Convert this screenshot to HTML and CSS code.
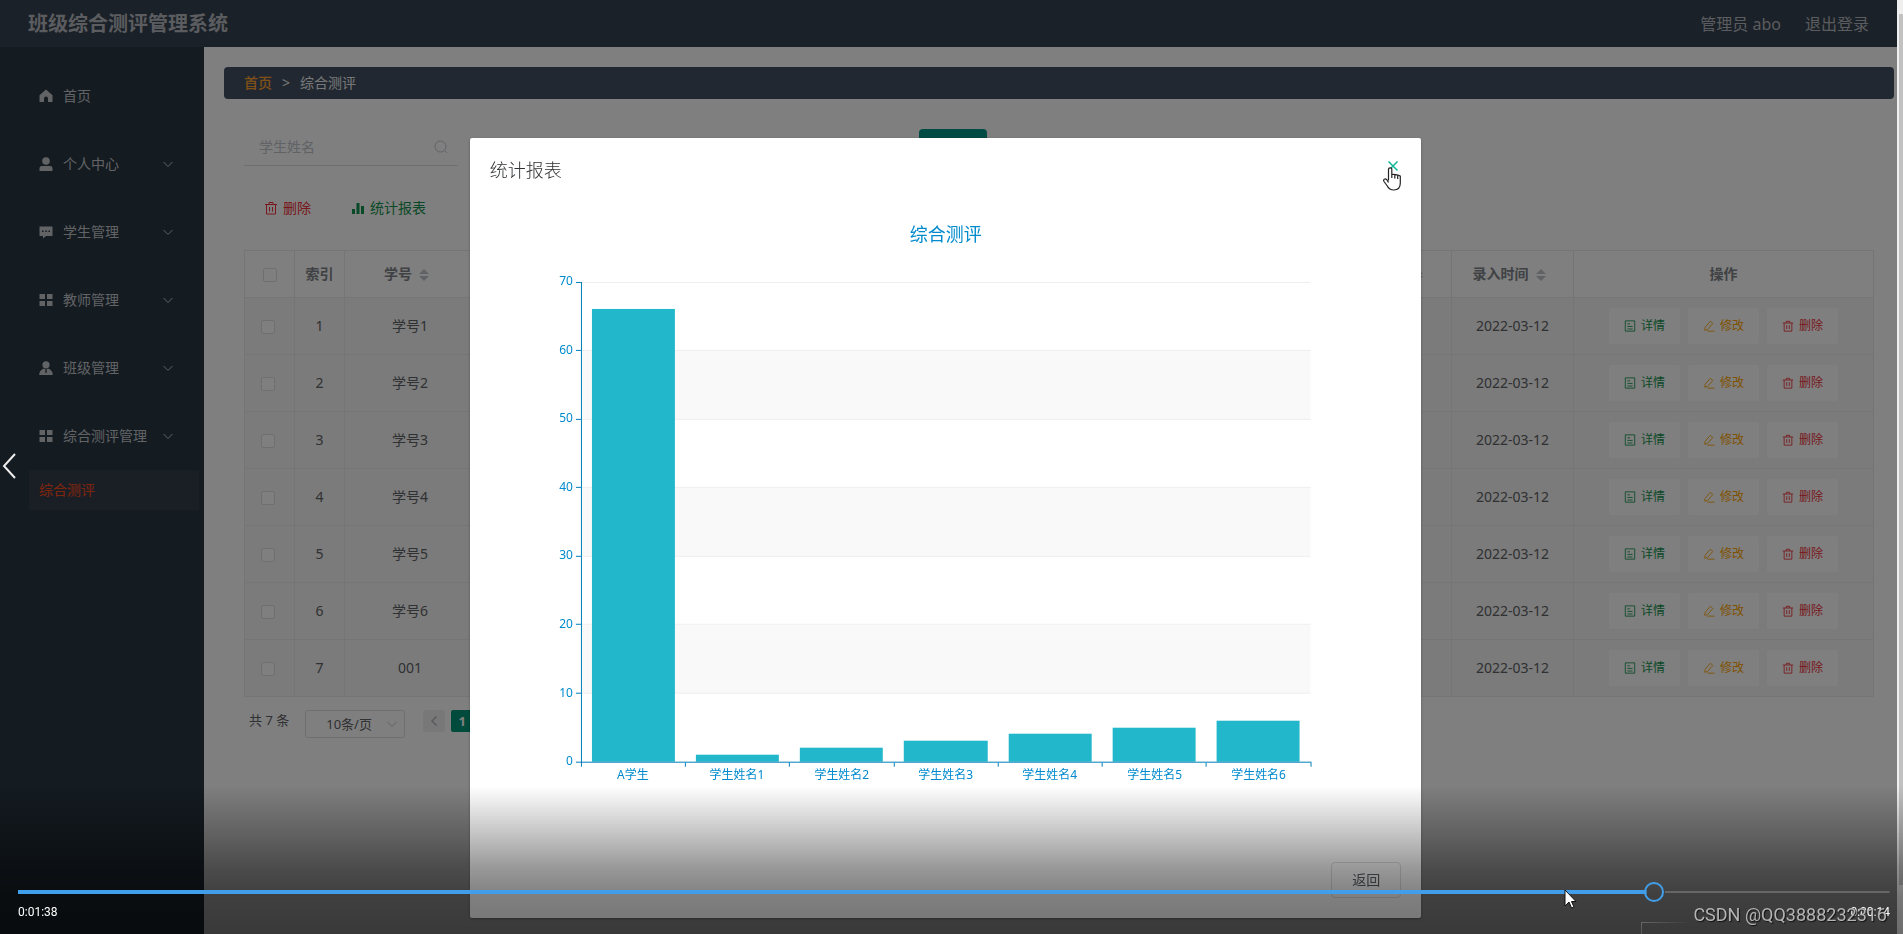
FILE: index.html
```html
<!DOCTYPE html>
<html lang="zh-CN">
<head>
<meta charset="utf-8">
<title>班级综合测评管理系统</title>
<link rel="stylesheet" href="styles.css">
</head>
<body>
<svg class="sprite" aria-hidden="true">
  <symbol id="home" viewBox="0 0 14 14"><path fill="currentColor" d="M7 .5.500 6.200V13H5V9.500a2 2 0 0 1 4 0V13h4.500V6.200z"/></symbol>
  <symbol id="user" viewBox="0 0 14 14"><circle cx="7" cy="4" r="3.800" fill="currentColor"/><path fill="currentColor" d="M.5 14v-3Q.5 9 3 9h8q2.500 0 2.500 2v3z"/></symbol>
  <symbol id="chat" viewBox="0 0 14 14"><path fill="currentColor" fill-rule="evenodd" d="M.5 1.500h13v9.500H7L4 13.500V11H.5zM3 5.500V7h1.500V5.500zm3.300 0V7h1.500V5.500zm3.200 0V7H11V5.500z"/></symbol>
  <symbol id="grid" viewBox="0 0 14 14"><path fill="currentColor" d="M.5 1H6v5H.5zM8 1h5.500v5H8zM.5 8H6v5H.5zM8 8h5.500v5H8z"/></symbol>
  <symbol id="person" viewBox="0 0 14 14"><circle cx="7" cy="3.800" r="3.600" fill="currentColor"/><path fill="currentColor" d="M.2 14q0-5 4.800-6.500l1.500 1L6.200 11l.8 1.500.8-1.500-.3-2.500 1.500-1q4.800 1.500 4.800 6.500z"/></symbol>
  <symbol id="down" viewBox="0 0 12 12"><path fill="none" stroke="currentColor" d="m1.500 4 4.500 4.500L10.500 4"/></symbol>
  <symbol id="left" viewBox="0 0 12 12"><path fill="none" stroke="currentColor" stroke-width="1.500" d="M8.500 1.500 4 6l4.500 4.500"/></symbol>
  <symbol id="search" viewBox="0 0 14 14"><circle cx="6.500" cy="6.500" r="5.500" fill="none" stroke="currentColor"/><path stroke="currentColor" d="m10.500 10.500 2.500 2.500"/></symbol>
  <symbol id="trash" viewBox="0 0 14 14"><path fill="none" stroke="currentColor" d="M1 3.500h12M2.500 3.500v9.500h9V3.500M5 3.500v-2h4v2M5.500 6v4.500M8.500 6v4.500"/></symbol>
  <symbol id="bars" viewBox="0 0 14 14"><path fill="currentColor" d="M1 8h3v5H1zM5.500 2h3v11h-3zM10 5h3v8h-3z"/></symbol>
  <symbol id="doc" viewBox="0 0 14 14"><path fill="none" stroke="currentColor" d="M1.500 1h11v12h-11zM4 4.500h3M4 7.500h6M4 10.500h6"/></symbol>
  <symbol id="edit" viewBox="0 0 14 14"><path fill="none" stroke="currentColor" d="m2.500 8.500 6-7 3 2.500-6 7-3.500 1zM5 13h8.500"/></symbol>
  <symbol id="sort" viewBox="0 0 10 12"><path fill="currentColor" d="M5 0 10 5H0zM0 7h10l-5 5z"/></symbol>
</svg>

<div class="app">
  <header class="topbar">
    <h1 class="brand">班级综合测评管理系统</h1>
    <div class="account"><span>管理员 abo</span><a href="#">退出登录</a></div>
  </header>
  <div class="layout">
    <nav class="sidebar">
      <a class="item" href="#"><svg class="icon"><use href="#home"/></svg><span>首页</span></a>
      <a class="item" href="#"><svg class="icon"><use href="#user"/></svg><span>个人中心</span><svg class="arrow"><use href="#down"/></svg></a>
      <a class="item" href="#"><svg class="icon"><use href="#chat"/></svg><span>学生管理</span><svg class="arrow"><use href="#down"/></svg></a>
      <a class="item" href="#"><svg class="icon"><use href="#grid"/></svg><span>教师管理</span><svg class="arrow"><use href="#down"/></svg></a>
      <a class="item" href="#"><svg class="icon"><use href="#person"/></svg><span>班级管理</span><svg class="arrow"><use href="#down"/></svg></a>
      <a class="item" href="#"><svg class="icon"><use href="#grid"/></svg><span>综合测评管理</span><svg class="arrow"><use href="#down"/></svg></a>
      <a class="subitem" href="#">综合测评</a>
    </nav>
    <main class="main">
      <div class="crumbs"><a href="#">首页</a><span class="sep">&gt;</span><span>综合测评</span></div>
      <div class="content">
        <form class="search">
          <label class="field"><input type="text" placeholder="学生姓名" aria-label="学生姓名"><svg class="icon"><use href="#search"/></svg></label>
          <button type="button" class="query" aria-label="查询"></button>
        </form>
        <div class="tools">
          <button type="button" class="tool red"><svg class="icon"><use href="#trash"/></svg>删除</button>
          <button type="button" class="tool green"><svg class="icon"><use href="#bars"/></svg>统计报表</button>
        </div>
        <table class="grid">
          <colgroup><col class="c-check"><col class="c-index"><col class="c-no"><col><col class="c-date"><col class="c-date"><col class="c-ops"></colgroup>
          <thead><tr><th><input type="checkbox" aria-label="全选"></th><th>索引</th><th class="sortable">学号<svg class="sort"><use href="#sort"/></svg></th><th></th><th class="end"><svg class="sort"><use href="#sort"/></svg></th><th class="sortable">录入时间<svg class="sort"><use href="#sort"/></svg></th><th>操作</th></tr></thead>
          <tbody>
            <tr><td class="pick"><input type="checkbox" aria-label="1"></td><td>1</td><td>学号1</td><td></td><td></td><td>2022-03-12</td><td><div class="ops"><button class="green"><svg><use href="#doc"/></svg>详情</button><button class="orange"><svg><use href="#edit"/></svg>修改</button><button class="red"><svg><use href="#trash"/></svg>删除</button></div></td></tr>
            <tr><td class="pick"><input type="checkbox" aria-label="2"></td><td>2</td><td>学号2</td><td></td><td></td><td>2022-03-12</td><td><div class="ops"><button class="green"><svg><use href="#doc"/></svg>详情</button><button class="orange"><svg><use href="#edit"/></svg>修改</button><button class="red"><svg><use href="#trash"/></svg>删除</button></div></td></tr>
            <tr><td class="pick"><input type="checkbox" aria-label="3"></td><td>3</td><td>学号3</td><td></td><td></td><td>2022-03-12</td><td><div class="ops"><button class="green"><svg><use href="#doc"/></svg>详情</button><button class="orange"><svg><use href="#edit"/></svg>修改</button><button class="red"><svg><use href="#trash"/></svg>删除</button></div></td></tr>
            <tr><td class="pick"><input type="checkbox" aria-label="4"></td><td>4</td><td>学号4</td><td></td><td></td><td>2022-03-12</td><td><div class="ops"><button class="green"><svg><use href="#doc"/></svg>详情</button><button class="orange"><svg><use href="#edit"/></svg>修改</button><button class="red"><svg><use href="#trash"/></svg>删除</button></div></td></tr>
            <tr><td class="pick"><input type="checkbox" aria-label="5"></td><td>5</td><td>学号5</td><td></td><td></td><td>2022-03-12</td><td><div class="ops"><button class="green"><svg><use href="#doc"/></svg>详情</button><button class="orange"><svg><use href="#edit"/></svg>修改</button><button class="red"><svg><use href="#trash"/></svg>删除</button></div></td></tr>
            <tr><td class="pick"><input type="checkbox" aria-label="6"></td><td>6</td><td>学号6</td><td></td><td></td><td>2022-03-12</td><td><div class="ops"><button class="green"><svg><use href="#doc"/></svg>详情</button><button class="orange"><svg><use href="#edit"/></svg>修改</button><button class="red"><svg><use href="#trash"/></svg>删除</button></div></td></tr>
            <tr><td class="pick"><input type="checkbox" aria-label="7"></td><td>7</td><td>001</td><td></td><td></td><td>2022-03-12</td><td><div class="ops"><button class="green"><svg><use href="#doc"/></svg>详情</button><button class="orange"><svg><use href="#edit"/></svg>修改</button><button class="red"><svg><use href="#trash"/></svg>删除</button></div></td></tr>
          </tbody>
        </table>
        <div class="pager">
          <span class="total">共 7 条</span>
          <label class="size"><select aria-label="每页条数"><option>10条/页</option></select><svg class="arrow"><use href="#down"/></svg></label>
          <button type="button" class="page prev" aria-label="上一页"><svg class="arrow"><use href="#left"/></svg></button>
          <button type="button" class="page current">1</button>
        </div>
      </div>
    </main>
  </div>
</div>

<div class="mask">
  <section class="dialog" role="dialog" aria-labelledby="dialog-title">
    <header class="dialog-head">
      <h2 id="dialog-title">统计报表</h2>
      <button type="button" class="close" aria-label="关闭"><svg viewBox="0 0 12 12"><path d="m1.500 1.500 9 9m0-9-9 9"/></svg></button>
    </header>
    <div class="dialog-body">
      <svg class="chart" viewBox="0 0 912 600" role="img" aria-label="综合测评">
        <text class="chart-title" x="456" y="19">综合测评</text>
        <path class="band" d="M91 129h730v68H91zM91 266h730v68H91zM91 403h730v68H91z"/>
        <path class="rule" d="M91 60.500h730M91 128.500h730M91 197.500h730M91 265.500h730M91 334.500h730M91 402.500h730M91 471.500h730"/>
        <g class="bar">
          <rect x="102" y="87" width="83" height="453"/><rect x="206" y="533" width="83" height="7"/><rect x="310" y="526" width="83" height="14"/><rect x="414" y="519" width="84" height="21"/><rect x="519" y="512" width="83" height="28"/><rect x="623" y="506" width="83" height="34"/><rect x="727" y="499" width="83" height="41"/>
        </g>
        <path class="axis" d="M91.500 60v485M86 540.500h736M86 60.500h5M86 128.500h5M86 197.500h5M86 265.500h5M86 334.500h5M86 402.500h5M86 471.500h5M195.500 541v4M299.500 541v4M404.500 541v4M508.500 541v4M612.500 541v4M716.500 541v4M821.500 541v4"/>
        <g class="label-y">
          <text x="83" y="63">70</text><text x="83" y="132">60</text><text x="83" y="200">50</text><text x="83" y="269">40</text><text x="83" y="337">30</text><text x="83" y="406">20</text><text x="83" y="475">10</text><text x="83" y="543">0</text>
        </g>
        <g class="label-x">
          <text x="143" y="557">A学生</text><text x="247" y="557">学生姓名1</text><text x="352" y="557">学生姓名2</text><text x="456" y="557">学生姓名3</text><text x="560" y="557">学生姓名4</text><text x="665" y="557">学生姓名5</text><text x="769" y="557">学生姓名6</text>
        </g>
      </svg>
    </div>
    <footer class="dialog-foot"><button type="button" class="back">返回</button></footer>
  </section>
</div>
<svg class="hand" viewBox="0 0 18 24"><path d="M5.500 13.500V2.500Q5.500.8 7.200.8T8.800 2.500v5q4.500-.5 8.500 1.500v7q0 7-6.500 7-4.500 0-6.500-4L1 14.500q-1-2 .8-2.500t3.700 3.500M8.800 7v4M11.800 7.500v4M14.700 8v4"/></svg>

<div class="scroll"><div class="thumb"></div></div>

<div class="player">
  <input class="progress" type="range" min="0" max="1000" value="878" aria-label="播放进度">
  <div class="times"><span>0:01:38</span><span>0:00:14</span></div>
</div>
<div class="corner"></div>
<div class="credit">CSDN @QQ3888232316</div>
<button type="button" class="slide-prev" aria-label="上一张"><svg viewBox="0 0 14 26"><path d="M13 1 2 13l11 12"/></svg></button>
<svg class="pointer" viewBox="0 0 13 20"><path d="M1 1v16l4-4 2.500 6 2.500-1-2.500-5.500H12z"/></svg>
</body>
</html>
```
FILE: styles.css
```css
* { box-sizing: border-box; }
body {
  margin: 0;
  height: 100vh;
  overflow: hidden;
  font: 14px/20px "Noto Sans", "Noto Sans CJK SC", sans-serif;
  color: #606266;
  background: #fff;
}
a { color: inherit; text-decoration: none; }
button, input, select { font: inherit; color: inherit; margin: 0; }
button { border: 0; padding: 0; background: none; }
h1, h2 { margin: 0; }
.sprite { display: none; }
.icon { width: 14px; height: 14px; flex: none; }
.arrow { width: 12px; height: 12px; flex: none; }
.green { color: #14924e; }
.red { color: #f03038; }
.orange { color: #ffa500; }

.app { display: flex; flex-direction: column; height: 100vh; padding-right: 6px; }
.topbar {
  display: flex;
  align-items: center;
  justify-content: space-between;
  height: 47px;
  padding: 0 28px;
  background: #364250;
  color: #b4b8be;
}
.brand { font-size: 20px; line-height: 24px; font-weight: 700; }
.account { display: flex; gap: 24px; font-size: 16px; }
.layout { display: flex; flex: 1; min-height: 0; }
.sidebar { flex: none; width: 204px; padding: 15px 5px 0 29px; background: #283643; color: #c4c6ca; }
.item { display: flex; align-items: center; gap: 10px; height: 68px; padding: 0 25px 0 10px; white-space: nowrap; }
.item .arrow { margin-left: auto; }
.subitem { display: block; padding: 10px; background: #343f4c; color: #ff4a1a; }

.main { flex: 1; min-width: 0; padding: 20px 3px 0 20px; }
.crumbs { display: flex; align-items: center; gap: 10px; height: 32px; padding: 0 20px; border-radius: 4px; background: #425162; color: #f0f0f0; }
.crumbs a { color: #ffa030; font-weight: 500; }
.content { padding: 30px 20px 0; }
.search { display: flex; gap: 5px; }
.field { display: flex; align-items: center; width: 214px; height: 37px; padding: 0 10px 0 15px; border-bottom: 1px solid #dcdfe6; color: #c0c4cc; }
.field input { flex: 1; min-width: 0; padding: 0; border: 0; outline: 0; background: none; }
.field input::placeholder { color: #c0c4cc; }
.query { width: 68px; height: 36px; margin-left: 28%; border-radius: 4px; background: #009688; }
.tools { display: flex; margin: 24px 0; }
.tool { display: flex; align-items: center; gap: 5px; height: 36px; padding: 0 20px; }

.grid { width: 100%; border-collapse: collapse; table-layout: fixed; text-align: center; }
.grid th, .grid td { height: 57px; padding: 0; border: 1px solid #e8eaee; }
.grid th { height: 47px; font-weight: 700; color: #808388; }
.grid td { background: #f6f6f6; }
.grid .sortable { padding-right: 7px; }
.grid .end { padding-right: 28px; text-align: right; }
.c-check, .c-index { width: 50px; }
.c-no { width: 131px; }
.c-date { width: 122px; }
.c-ops { width: 300px; }
.grid input { appearance: none; display: inline-block; vertical-align: middle; width: 14px; height: 14px; border: 1px solid #dcdfe6; border-radius: 2px; background: #fff; }
.grid .pick { padding-right: 4px; }
.sort { width: 10px; height: 12px; margin-left: 7px; vertical-align: middle; color: #c0c4cc; }
.ops { display: flex; justify-content: center; gap: 8px; }
.ops button { display: flex; align-items: center; gap: 5px; height: 36px; padding: 0 15px; border-radius: 2px; background: #fff; font-size: 12px; }
.ops svg { width: 12px; height: 12px; }

.pager { display: flex; align-items: flex-start; padding: 13px 5px; font-size: 13px; }
.size { display: flex; align-items: center; height: 28px; width: 100px; margin: 0 18px 0 16px; padding: 0 6px 0 20px; border: 1px solid #dcdfe6; border-radius: 3px; }
.size select { flex: 1; appearance: none; padding: 0; border: 0; background: none; }
.size .arrow { color: #c0c4cc; }
.page { display: grid; place-items: center; width: 22px; height: 22px; margin-right: 6px; border-radius: 2px; }
.prev { background: #f0f0f2; color: #b0b4bc; }
.current { background: #009678; color: #fff; font-weight: 700; }

.mask { position: fixed; inset: 0; display: flex; align-items: flex-start; justify-content: center; padding: 138px 12px 0 0; background: linear-gradient(#00000080, #00000080) no-repeat left / calc(100% - 6px) 100%; }
.dialog { width: 50vw; border-radius: 2px; background: #fff; box-shadow: 0 1px 3px rgba(0, 0, 0, .3); }
.dialog-head { display: flex; justify-content: space-between; align-items: flex-start; padding: 20px 20px 10px; color: #303133; }
.dialog-head h2 { font-size: 18px; line-height: 24px; font-weight: 300; }
.close { width: 16px; height: 16px; }
.close svg { display: block; width: 12px; height: 12px; margin: auto; fill: none; stroke: #10b898; stroke-width: 1.500; }
.dialog-body { padding: 30px 20px; }
.chart { display: block; width: 100%; }
.chart text { font-size: 12px; fill: #008acd; text-anchor: middle; }
.chart .chart-title { font-size: 18px; }
.chart .label-y text { text-anchor: end; }
.band { fill: #f9f9f9; }
.rule { stroke: #eee; }
.bar { fill: #23b7cb; }
.axis { fill: none; stroke: #007db8; }
.dialog-foot { display: flex; justify-content: flex-end; padding: 10px 20px 20px; }
.back { width: 70px; height: 36px; border: 1px solid #dcdfe6; border-radius: 4px; color: #606266; }

.scroll { position: fixed; top: 0; right: 0; bottom: 0; width: 6px; padding: 14px 0 49px 2px; background: #efefef; }
.thumb { height: 100%; background: #c1c1c1; }

.player {
  position: fixed;
  left: 0;
  right: 0;
  bottom: 0;
  height: 148px;
  padding: 96px 13px 0 18px;
  background: linear-gradient(rgba(0, 0, 0, 0), rgba(0, 0, 0, .25) 35%, rgba(0, 0, 0, .4) 55%, rgba(0, 0, 0, .5) 75%, rgba(0, 0, 0, .55));
}
.progress {
  display: block;
  appearance: none;
  width: 100%;
  height: 20px;
  margin: 0;
  background:
    linear-gradient(#409eea, #409eea) no-repeat left / 87% 4px,
    linear-gradient(#666, #666) no-repeat right / 12% 2px;
}
.progress::-webkit-slider-thumb { appearance: none; width: 20px; height: 20px; border: 2px solid #409eea; border-radius: 50%; background: transparent; }
.times { display: flex; justify-content: space-between; font-family: Roboto, sans-serif; font-size: 12px; color: #fff; }
.corner { position: fixed; right: 162px; bottom: 0; width: 100px; height: 12px; background: linear-gradient(90deg, #666, transparent 50%) no-repeat top / 100% 1px, linear-gradient(#666, #555) no-repeat left / 1px 100%; }
.credit { position: fixed; right: 16px; bottom: 8px; font: 18px/22px Roboto, sans-serif; color: #b4b4b4; text-shadow: 1px 1px 1px #111; }
.slide-prev { position: fixed; left: 2px; top: calc(50% - 14px); width: 14px; height: 26px; }
.slide-prev svg, .hand, .pointer { display: block; fill: none; }
.slide-prev path { stroke: #eee; stroke-width: 2; }
.hand { position: fixed; left: 1383px; top: 167px; width: 18px; height: 24px; }
.hand path { fill: #fff; stroke: #222; stroke-width: 1.200; }
.pointer { position: fixed; left: 1564px; top: 889px; width: 13px; height: 20px; }
.pointer path { fill: #fff; stroke: #111; }
```
